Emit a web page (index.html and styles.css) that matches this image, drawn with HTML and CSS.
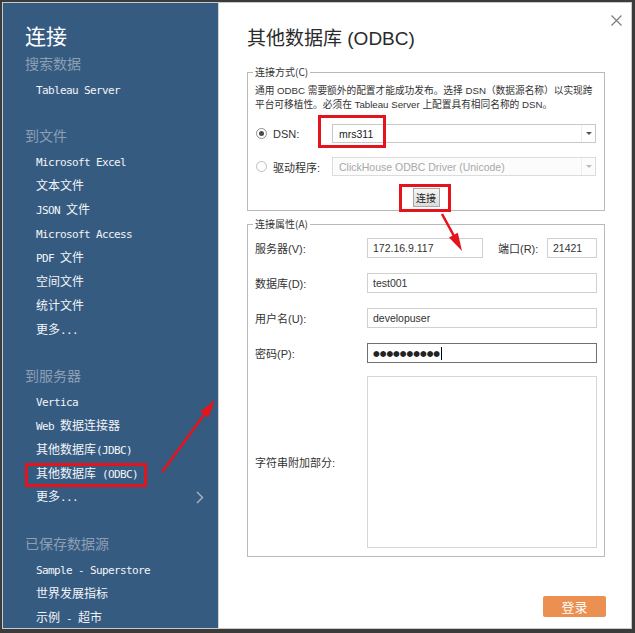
FILE: index.html
```html
<!DOCTYPE html>
<html lang="zh-CN">
<head>
<meta charset="utf-8">
<title>其他数据库 (ODBC)</title>
<link rel="stylesheet" href="styles.css">
</head>
<body>
<div class="window">
  <aside class="sidebar">
    <div class="sb-title">连接</div>
    <div class="sb-head first">搜索数据</div>
    <div class="sb-item"><span class="m">Tableau Server</span></div>

    <div class="sb-head">到文件</div>
    <div class="sb-item"><span class="m">Microsoft Excel</span></div>
    <div class="sb-item">文本文件</div>
    <div class="sb-item"><span class="m">JSON </span>文件</div>
    <div class="sb-item"><span class="m">Microsoft Access</span></div>
    <div class="sb-item"><span class="m">PDF </span>文件</div>
    <div class="sb-item">空间文件</div>
    <div class="sb-item">统计文件</div>
    <div class="sb-item">更多<span class="m">...</span></div>

    <div class="sb-head">到服务器</div>
    <div class="sb-item"><span class="m">Vertica</span></div>
    <div class="sb-item"><span class="m">Web </span>数据连接器</div>
    <div class="sb-item">其他数据库<span class="m">(JDBC)</span></div>
    <div class="sb-item boxed">其他数据库<span class="m"> (ODBC)</span></div>
    <div class="sb-item more"><span>更多<span class="m">...</span></span>
      <svg class="chev" width="8" height="13" viewBox="0 0 8 13"><polyline points="1,1 6.5,6.5 1,12" fill="none" stroke="#a9b6c5" stroke-width="1.4"/></svg>
    </div>

    <div class="sb-head">已保存数据源</div>
    <div class="sb-item"><span class="m">Sample - Superstore</span></div>
    <div class="sb-item">世界发展指标</div>
    <div class="sb-item">示例<span class="m"> - </span>超市</div>
  </aside>

  <main class="panel">
    <div class="topbar">
      <svg class="close" width="11" height="11" viewBox="0 0 11 11"><path d="M0.5 0.5 L10.5 10.5 M10.5 0.5 L0.5 10.5" stroke="#7c7c7c" stroke-width="1.2" fill="none"/></svg>
    </div>
    <h1>其他数据库 (ODBC)</h1>

    <fieldset class="group g1">
      <legend>连接方式(C)</legend>
      <p class="desc">通用 ODBC 需要额外的配置才能成功发布。选择 DSN（数据源名称）以实现跨<br>平台可移植性。必须在 Tableau Server 上配置具有相同名称的 DSN。</p>
      <div class="row r-dsn">
        <span class="radio on"></span>
        <span class="rlabel">DSN:</span>
        <div class="select mark-dsn"><span class="val">mrs311</span><span class="caret"></span></div>
      </div>
      <div class="row r-drv">
        <span class="radio"></span>
        <span class="rlabel">驱动程序:</span>
        <div class="select disabled"><span class="val">ClickHouse ODBC Driver (Unicode)</span><span class="caret"></span></div>
      </div>
      <div class="btn-row">
        <div class="btn mark-btn">连接</div>
      </div>
    </fieldset>

    <fieldset class="group g2">
      <legend>连接属性(A)</legend>
      <div class="frow first">
        <span class="flabel">服务器(V):</span>
        <div class="input server">172.16.9.117</div>
        <span class="flabel plabel">端口(R):</span>
        <div class="input port">21421</div>
      </div>
      <div class="frow">
        <span class="flabel">数据库(D):</span>
        <div class="input">test001</div>
      </div>
      <div class="frow">
        <span class="flabel">用户名(U):</span>
        <div class="input">developuser</div>
      </div>
      <div class="frow">
        <span class="flabel">密码(P):</span>
        <div class="input pwd"><span class="dots">●●●●●●●●●●</span><span class="cursor"></span></div>
      </div>
      <div class="frow ta-row">
        <span class="flabel">字符串附加部分:</span>
        <div class="textarea"></div>
      </div>
    </fieldset>

    <div class="actions">
      <div class="login">登录</div>
    </div>
  </main>
</div>

<svg class="arrows" width="635" height="633" viewBox="0 0 635 633">
  <line x1="162" y1="472" x2="205" y2="413.5" stroke="#e3141c" stroke-width="2.6"/>
  <polygon points="215,400 208.3,417.5 200.3,411.5" fill="#e3141c"/>
  <line x1="442" y1="214" x2="454" y2="236" stroke="#e3141c" stroke-width="2.6"/>
  <polygon points="462,251 457.8,232.8 449,237.6" fill="#e3141c"/>
</svg>
</body>
</html>
```

FILE: styles.css
```css
*, *::before, *::after { box-sizing: border-box; }

html, body {
  margin: 0;
  padding: 0;
}

body {
  position: relative;
  width: 635px;
  height: 633px;
  overflow: hidden;
  background: #3b3b3b;
  font-family: "Liberation Sans", "Noto Sans CJK SC", sans-serif;
}

.window {
  margin: 2px 0 0 2px;
  width: 630px;
  height: 627px;
  border: 1px solid #c9c9c9;
  background: #fff;
  display: flex;
}

/* ---------- sidebar ---------- */
.sidebar {
  width: 216px;
  flex: none;
  background: #365b81;
  border-right: 1px solid #d4d4d4;
  color: #f2f5f8;
  font-family: "Noto Sans CJK SC", sans-serif;
}

.sb-title {
  margin: 18px 0 0 22px;
  font-size: 21px;
  line-height: 28px;
  color: #ffffff;
}

.sb-head {
  margin: 22px 0 2px 22px;
  font-size: 14px;
  line-height: 24px;
  color: #8c9fb5;
}

.sb-head.first {
  margin-top: 2px;
}

.sb-item {
  height: 24px;
  line-height: 24px;
  padding-left: 33px;
  font-size: 12px;
  white-space: pre;
}

.sb-item .m {
  font-family: "DejaVu Sans Mono", monospace;
  font-size: 11px;
  letter-spacing: -0.62px;
}

.sb-item.boxed {
  position: relative;
}

.sb-item.boxed::after {
  content: "";
  position: absolute;
  left: 22px;
  top: 2px;
  width: 122px;
  height: 24px;
  border: 3px solid #e3141c;
}

.sb-item.more {
  display: flex;
  align-items: center;
  justify-content: space-between;
  padding-right: 14px;
}

.chev {
  display: block;
}

/* ---------- panel ---------- */
.panel {
  flex: 1;
  padding: 12px 26px 0 28px;
  display: flex;
  flex-direction: column;
  color: #333;
}

.topbar {
  height: 11px;
  display: flex;
  justify-content: flex-end;
  margin-right: -17px;
}

.close {
  display: block;
}

h1 {
  margin: 0;
  font-size: 19px;
  line-height: 26px;
  font-weight: normal;
  color: #2a2a2a;
}

.group {
  margin: 13px 0 0;
  padding: 5px 7px 3px;
  border: 1px solid #bababa;
  min-width: 0;
}

.group legend {
  font-size: 10px;
  line-height: 14px;
  padding: 0 2px;
  margin-left: -2px;
  color: #333;
  font-family: "Noto Sans CJK SC", sans-serif;
}

.desc {
  margin: 0;
  font-size: 9.7px;
  line-height: 14px;
  color: #333;
  white-space: nowrap;
}

.row {
  display: flex;
  align-items: center;
  height: 19px;
}

.r-dsn { margin-top: 12px; }
.r-drv { margin-top: 14px; }

.radio {
  width: 11px;
  height: 11px;
  margin: 0 6px 0 1px;
  border-radius: 50%;
  border: 1px solid #8e8e8e;
  background: #fff;
  display: flex;
  align-items: center;
  justify-content: center;
  flex: none;
}

.radio.on::after {
  content: "";
  width: 5px;
  height: 5px;
  border-radius: 50%;
  background: #4a4a4a;
}

.r-drv .radio {
  border-color: #bdbdbd;
}

.rlabel {
  width: 59px;
  flex: none;
  font-size: 11px;
  color: #333;
}

.select {
  position: relative;
  width: 264px;
  height: 19px;
  border: 1px solid #c9c9c9;
  background: #fff;
  display: flex;
  align-items: center;
  padding-left: 6px;
  font-size: 10.5px;
  color: #222;
}

.select .val {
  flex: 1;
}

.caret {
  width: 14px;
  align-self: stretch;
  border-left: 1px solid #ededed;
  display: flex;
  align-items: center;
  justify-content: center;
}

.caret::before {
  content: "";
  border-left: 3px solid transparent;
  border-right: 3px solid transparent;
  border-top: 3px solid #555;
}

.select.disabled {
  background: #fcfcfc;
  border-color: #dcdcdc;
  color: #a9a9a9;
}

.select.disabled .caret::before {
  border-top-color: #bbb;
}

.mark-dsn::after {
  content: "";
  position: absolute;
  left: -15px;
  top: -10px;
  width: 68px;
  height: 33px;
  border: 3px solid #e3141c;
}

.btn-row {
  display: flex;
  justify-content: center;
  margin-top: 12px;
}

.btn {
  position: relative;
  width: 27px;
  height: 19px;
  border: 1px solid #a9a9a9;
  background: linear-gradient(#f5f5f5, #dcdcdc);
  font-size: 10px;
  line-height: 17px;
  text-align: center;
  color: #222;
  font-family: "Noto Sans CJK SC", sans-serif;
}

.mark-btn::after {
  content: "";
  position: absolute;
  left: -15px;
  top: -5px;
  width: 52px;
  height: 28px;
  border: 3px solid #e3141c;
}

.g2 {
  margin-top: 6px;
  padding: 7px 7px 8px;
}

.frow {
  display: flex;
  align-items: center;
  margin-top: 15px;
}

.frow.first { margin-top: 0; }
.frow.ta-row { margin-top: 13px; }

.flabel {
  width: 112px;
  flex: none;
  font-size: 11px;
  color: #333;
}

.plabel {
  width: 49px;
  margin-left: 15px;
}

.input {
  flex: 1;
  height: 20px;
  border: 1px solid #d0d0d0;
  padding-left: 5px;
  display: flex;
  align-items: center;
  font-size: 10.5px;
  color: #333;
  background: #fff;
}

.input.server {
  flex: none;
  width: 116px;
}

.input.port {
  flex: none;
  width: 50px;
}

.input.pwd {
  border-color: #707070;
}

.dots {
  font-family: "DejaVu Sans", sans-serif;
  font-size: 7.7px;
  color: #222;
}

.cursor {
  width: 1px;
  height: 13px;
  margin-left: 1px;
  background: #000;
}

.textarea {
  flex: 1;
  height: 172px;
  border: 1px solid #d6d6d6;
  background: #fff;
}

.actions {
  display: flex;
  justify-content: flex-end;
  margin-top: 39px;
  margin-right: -1px;
}

.login {
  width: 63px;
  height: 21px;
  border-radius: 2px;
  background: #ec9051;
  color: #fff;
  font-size: 13px;
  display: flex;
  align-items: center;
  justify-content: center;
  font-family: "Noto Sans CJK SC", sans-serif;
}

/* ---------- annotation arrows ---------- */
.arrows {
  position: absolute;
  left: 0;
  top: 0;
  pointer-events: none;
}
```
